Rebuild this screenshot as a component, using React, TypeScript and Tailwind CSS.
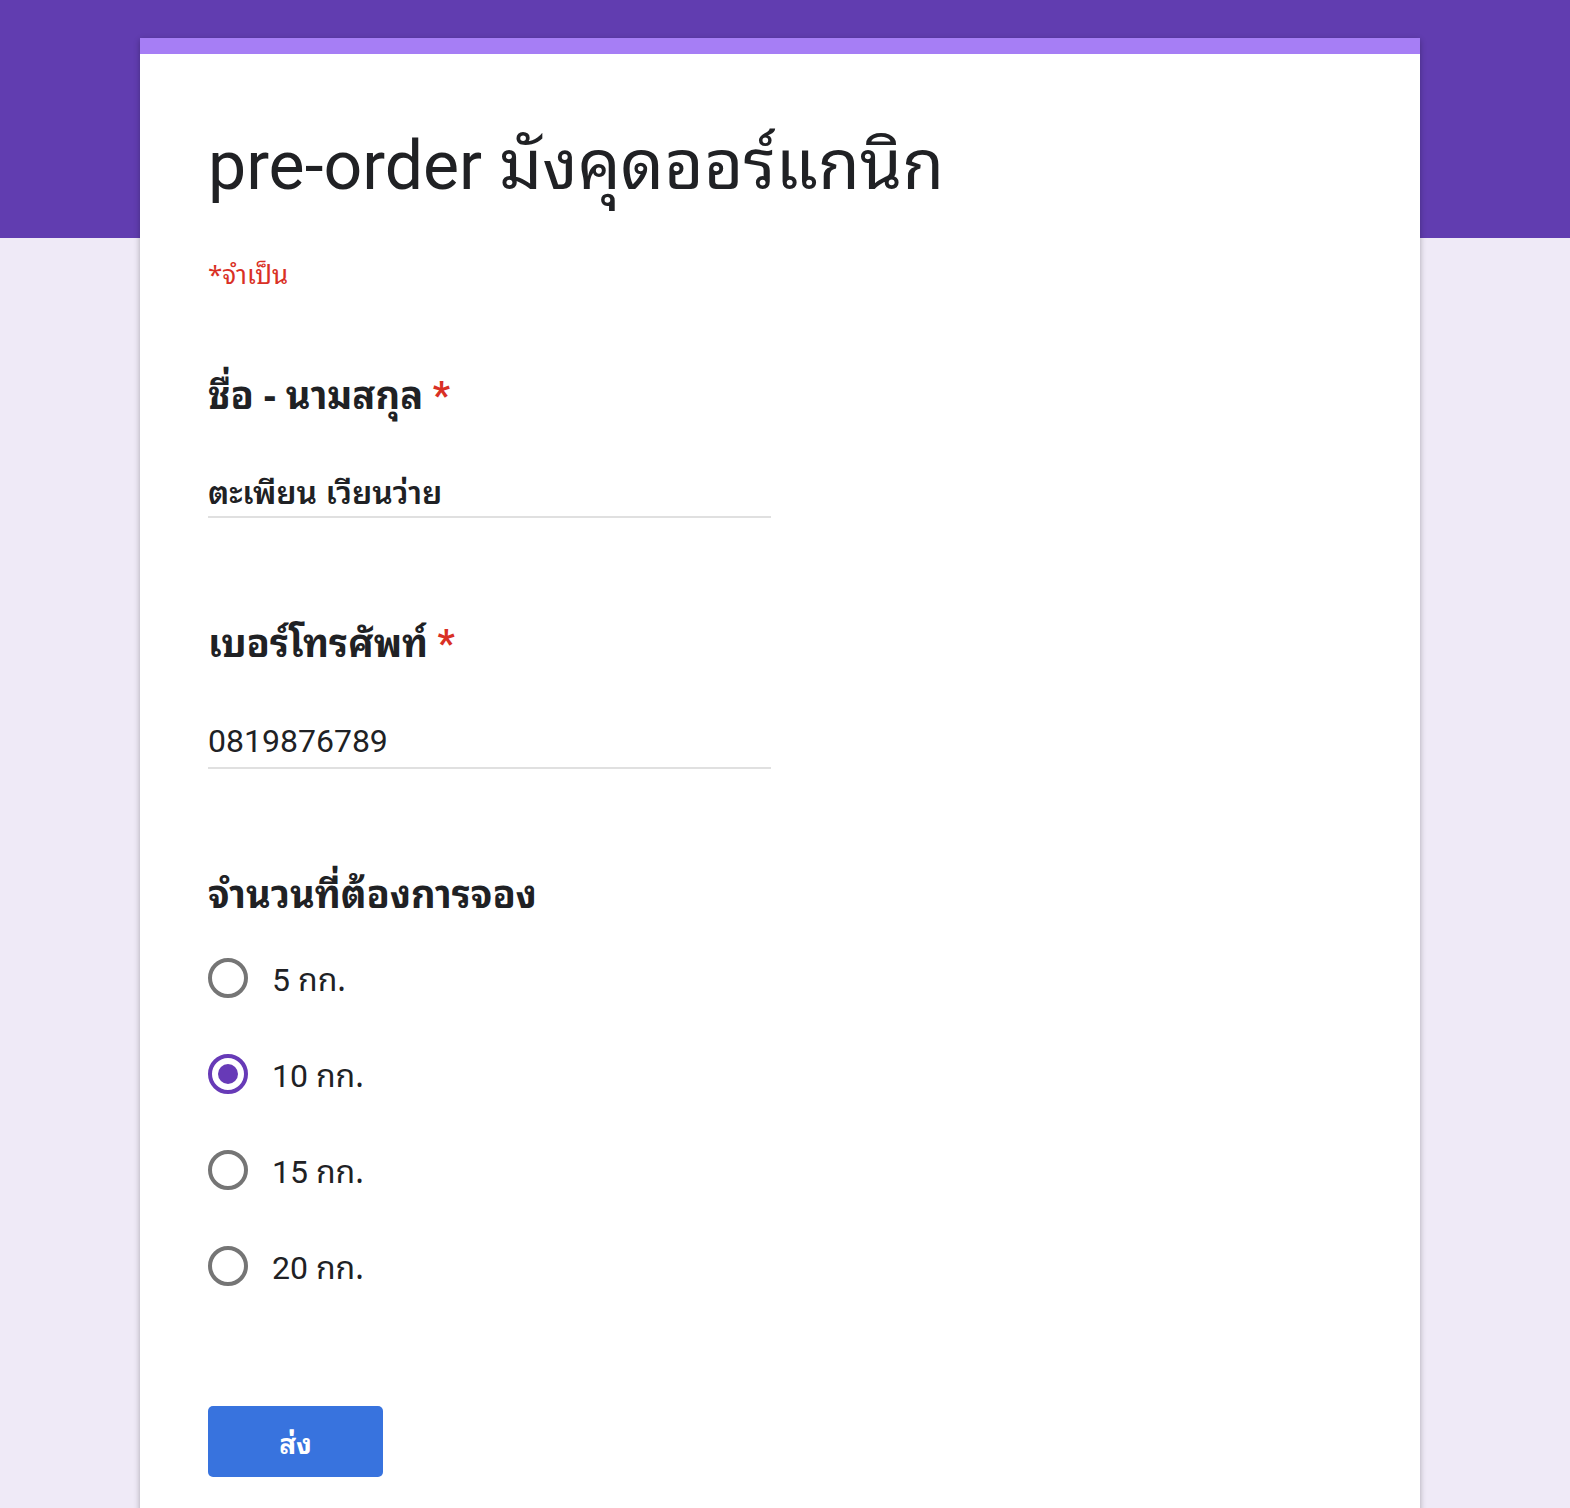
import React from "react";

const options = ["5", "10", "15", "20"];
const TH = "font-['Noto_Sans_Thai_Looped','Noto_Sans_Thai',sans-serif]";

function Radio({ checked }: { checked: boolean }) {
  return checked ? (
    <div className="w-[40px] h-[40px] rounded-full border-[4px] border-[#673ab7] flex items-center justify-center">
      <div className="w-[20px] h-[20px] rounded-full bg-[#673ab7]" />
    </div>
  ) : (
    <div className="w-[40px] h-[40px] rounded-full border-[4px] border-[#757575]" />
  );
}

export default function App() {
  return (
    <div className="min-h-[1508px] bg-[#efeaf7] relative font-['Roboto','Noto_Sans_Thai_Looped',sans-serif]">
      <div className="h-[238px] bg-[#613db0] w-full absolute top-0 left-0" />
      <div className="relative pt-[38px] pl-[140px]">
        <div className="w-[1280px] bg-white shadow-[0_2px_6px_rgba(0,0,0,0.3)]">
          <div className="h-[16px] bg-[#a67ef5]" />
          <div className="px-[68px] pt-[57px] pb-[60px] text-[#202124]">
            <h1 className="text-[68px] leading-[96px] font-normal">
              pre-order <span className={TH}>มังคุดออร์แกนิก</span>
            </h1>
            <div className={`mt-[38px] text-[26px] leading-[40px] text-[#d93025] ${TH}`}>*จำเป็น</div>

            <div className="mt-[76px] text-[38px] leading-[48px] font-bold">
              <span className={TH}>ชื่อ - นามสกุล</span> <span className="text-[#d93025]">*</span>
            </div>
            <div className="mt-[48px] w-[563px] border-b-[2px] border-[#e0e0e0] pb-[4px]">
              <div className={`text-[32px] leading-[44px] font-semibold ${TH}`}>ตะเพียน เวียนว่าย</div>
            </div>

            <div className="mt-[98px] text-[38px] leading-[48px] font-bold">
              <span className={TH}>เบอร์โทรศัพท์</span> <span className="text-[#d93025]">*</span>
            </div>
            <div className="mt-[51px] w-[563px] border-b-[2px] border-[#e0e0e0] pb-[4px]">
              <div className="text-[32px] leading-[44px]">0819876789</div>
            </div>

            <div className={`mt-[98px] text-[38px] leading-[48px] font-bold ${TH}`}>จำนวนที่ต้องการจอง</div>

            <div className="mt-[15px] flex flex-col">
              {options.map((o, i) => (
                <div key={o} className="h-[96px] flex items-center gap-[24px]">
                  <Radio checked={i === 1} />
                  <span className="text-[32px] leading-[44px]">
                    {o} <span className={TH}>กก.</span>
                  </span>
                </div>
              ))}
            </div>

            <button className={`mt-[92px] w-[175px] h-[71px] rounded-[5px] bg-[#3873de] text-white text-[28px] font-bold flex items-center justify-center ${TH}`}>
              ส่ง
            </button>
          </div>
        </div>
      </div>
    </div>
  );
}
